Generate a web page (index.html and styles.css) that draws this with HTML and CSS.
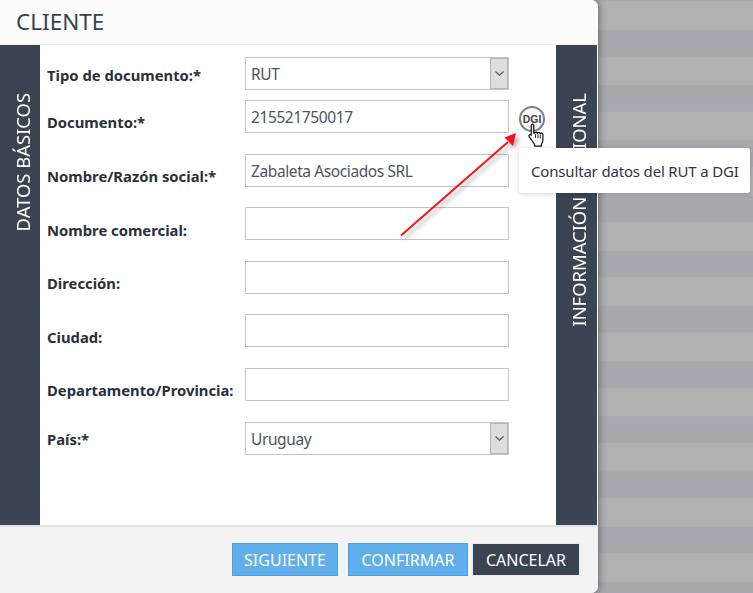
FILE: index.html
```html
<!DOCTYPE html>
<html lang="es">
<head>
<meta charset="utf-8">
<title>Cliente</title>
<link rel="stylesheet" href="styles.css">
</head>
<body>
<div class="dialog">
  <header class="head">CLIENTE</header>
  <main class="main">
    <div class="tab tab-left"><span class="tab-text">DATOS BÁSICOS</span></div>
    <form class="form">
      <div class="row row-first">
        <label class="lbl lbl-small">Tipo de documento:*</label>
        <div class="select"><span class="select-value">RUT</span><span class="select-btn"><svg width="11" height="7" viewBox="0 0 11 7"><path d="M1.5 1.5 5.5 5.2 9.5 1.5" fill="none" stroke="#555" stroke-width="1.2"/></svg></span></div>
      </div>
      <div class="row">
        <label class="lbl lbl-mid">Documento:*</label>
        <div class="input">215521750017</div>
      </div>
      <div class="row">
        <label class="lbl">Nombre/Razón social:*</label>
        <div class="input">Zabaleta Asociados SRL</div>
      </div>
      <div class="row">
        <label class="lbl">Nombre comercial:</label>
        <div class="input"></div>
      </div>
      <div class="row">
        <label class="lbl">Dirección:</label>
        <div class="input"></div>
      </div>
      <div class="row">
        <label class="lbl">Ciudad:</label>
        <div class="input"></div>
      </div>
      <div class="row">
        <label class="lbl">Departamento/Provincia:</label>
        <div class="input"></div>
      </div>
      <div class="row">
        <label class="lbl lbl-small">País:*</label>
        <div class="select"><span class="select-value">Uruguay</span><span class="select-btn"><svg width="11" height="7" viewBox="0 0 11 7"><path d="M1.5 1.5 5.5 5.2 9.5 1.5" fill="none" stroke="#555" stroke-width="1.2"/></svg></span></div>
      </div>
    </form>
    <div class="tab tab-right"><span class="tab-text">INFORMACIÓN ADICIONAL</span></div>
  </main>
  <footer class="foot">
    <button class="btn btn-blue" type="button">SIGUIENTE</button>
    <button class="btn btn-blue btn-confirm" type="button">CONFIRMAR</button>
    <button class="btn btn-dark" type="button">CANCELAR</button>
  </footer>
</div>

<div class="dgi"><span class="dgi-text">DGI</span></div>
<svg class="cursor" width="19" height="25" viewBox="0 0 20 26"><path d="M4.5 2.2c0-1.600 2.600-1.600 2.600 0v8.300l1 .1c0-1.500 2.500-1.500 2.500.1l.6.1c.1-1.400 2.500-1.400 2.500.2l.6.2c.3-1.200 2.400-1 2.400.5v6.300c0 2-.7 3-1.500 4.300v1.800H7.900v-1.900L2.400 14.500c-1.200-1.700 1-3.200 2.100-1.800z" fill="#fff" stroke="#111" stroke-width="1.300" stroke-linejoin="round"/><path d="M9 11.500v4M11.500 12v4M14 12.500v3.500" stroke="#111" stroke-width="1" fill="none"/></svg>
<svg class="arrow" width="130" height="115" viewBox="0 0 130 115"><path d="M3 104.500 110 11" stroke="#f5141a" stroke-width="2"/><path d="M118 2 115 15 106.500 6.500z" fill="#f5101a"/></svg>
<div class="tooltip">Consultar datos del RUT a DGI</div>
</body>
</html>
```

FILE: styles.css
```css
* { box-sizing: border-box; }
html, body { margin: 0; height: 593px; overflow: hidden; }
body {
  position: relative;
  font-family: "Noto Sans", "Open Sans", sans-serif;
  color: #2f3640;
  background-color: #b1b1b1;
  background-image: linear-gradient(#a9a8ad 0 26.5px, #b1b1b1 26.5px);
  background-size: 100% 55.2px;
  background-position: 0 30px;
}
.dialog {
  width: 598px;
  height: 593px;
  display: flex;
  flex-direction: column;
  background: #fff;
  border-radius: 0 7px 7px 0;
  overflow: hidden;
  box-shadow: 2px 0 6px rgba(70, 70, 70, .55);
}
.head {
  height: 45px;
  flex: none;
  padding: 7px 0 0 16px;
  font-size: 22.500px;
  line-height: 29px;
  color: #3a424d;
  background: #fcfcfc;
  border-bottom: 1px solid #eee;
}
.main { flex: 1; display: flex; min-height: 0; padding-right: 1px; }
.tab {
  flex: none;
  background: #3a4452;
  color: #fff;
  padding-top: 48px;
  display: flex;
  justify-content: center;
  align-items: flex-start;
}
.tab-left { width: 40px; padding-left: 5px; }
.tab-right { width: 41px; padding-left: 4px; }
.tab-text {
  writing-mode: vertical-rl;
  transform: rotate(180deg);
  font-size: 18.400px;
  line-height: 22px;
  white-space: nowrap;
}
.form {
  flex: 1;
  padding: 12px 47px 0 7px;
  display: flex;
  flex-direction: column;
  gap: 20.600px;
}
.row { display: flex; align-items: center; height: 33px; flex: none; }
.row-first { margin-bottom: -10.600px; }
.lbl {
  width: 198px;
  flex: none;
  font-size: 14.800px;
  font-weight: 700;
  line-height: 20px;
  color: #2b3038;
  white-space: nowrap;
  padding-top: 12px;
}
.lbl-small { padding-top: 2px; }
.lbl-mid { padding-top: 10px; }
.input, .select {
  width: 264px;
  height: 33px;
  border: 1px solid #c3c3c3;
  font-size: 15.500px;
  letter-spacing: -.4px;
  line-height: 32px;
  color: #4b5560;
  background: #fff;
}
.input { padding-left: 5px; }
.select { display: flex; justify-content: space-between; padding-left: 5px; }
.select-btn {
  width: 18px;
  height: 31px;
  background: #dedede;
  border: 1px solid #b5b5b5;
  display: flex;
  align-items: center;
  justify-content: center;
}
.foot {
  height: 68px;
  flex: none;
  background: #f3f3f3;
  border-top: 2px solid #e2e2e2;
  display: flex;
  align-items: center;
  padding: 0 0 1px 232px;
}
.btn {
  height: 33px;
  font-family: inherit;
  font-size: 16px;
  padding: 0;
  color: #fff;
}
.btn-blue { width: 106px; background: #60aeea; border: 1px solid #4a9fe0; }
.btn-confirm { width: 120px; margin-left: 10px; }
.btn-dark { width: 106px; height: 31px; margin-left: 5px; background: #3a4350; border: 0; box-shadow: 0 0 0 1px #e9ebf0; }
.dgi {
  position: absolute;
  left: 519px;
  top: 106px;
  width: 26px;
  height: 26px;
  border-radius: 50%;
  border: 2px solid #808080;
  background: #f7f7f7;
  display: flex;
  align-items: center;
  justify-content: center;
}
.dgi-text { font-size: 10.500px; font-weight: 700; color: #444; font-family: "Liberation Sans", sans-serif; }
.cursor { position: absolute; left: 527px; top: 123px; }
.arrow { position: absolute; left: 398px; top: 131px; filter: drop-shadow(3px 3px 2px rgba(0, 0, 0, .3)); }
.tooltip {
  position: absolute;
  left: 519px;
  top: 148px;
  width: 231px;
  height: 45px;
  background: #fff;
  border-radius: 3px;
  box-shadow: 0 1px 5px rgba(0, 0, 0, .18);
  font-size: 15px;
  letter-spacing: -.17px;
  line-height: 46px;
  padding-left: 12px;
  color: #2f3640;
  white-space: nowrap;
}
```
